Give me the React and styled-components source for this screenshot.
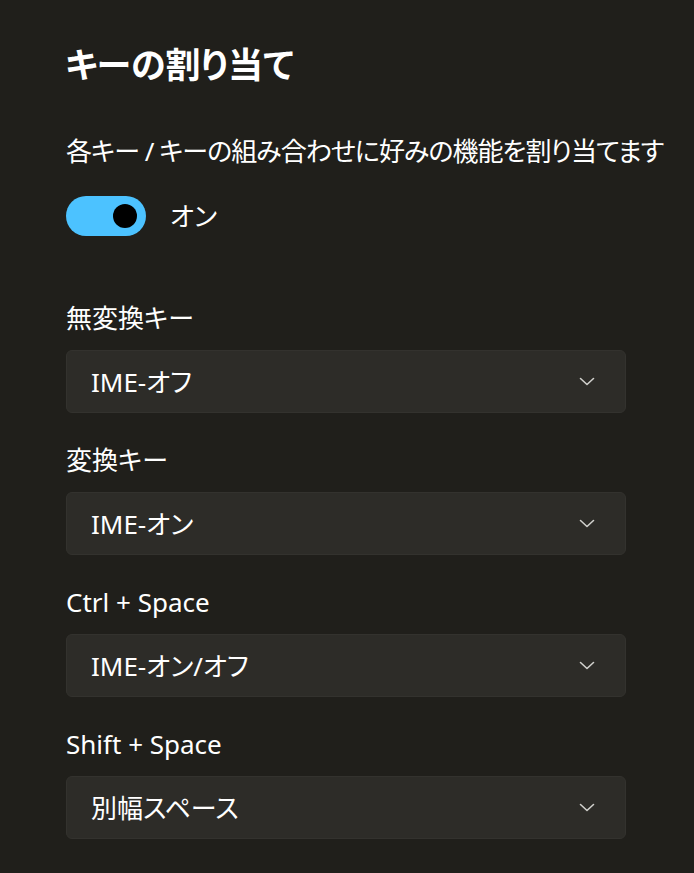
import React from 'react';
import styled, { createGlobalStyle } from 'styled-components';

const GlobalStyle = createGlobalStyle`
  html, body {
    margin: 0;
    padding: 0;
    background: #201f1b;
  }
  body {
    font-family: "Noto Sans", "Noto Sans CJK JP", sans-serif;
    font-feature-settings: "palt";
    color: #ffffff;
  }
`;

const Page = styled.div`
  width: 694px;
  height: 873px;
  box-sizing: border-box;
  padding: 41px 0 0 66px;
  background: #201f1b;
  overflow: hidden;
`;

const Title = styled.h1`
  margin: 0 0 0 -1px;
  font-size: 35px;
  line-height: 48px;
  font-weight: 700;
`;

const Description = styled.p`
  margin: 44px 0 0;
  font-size: 26px;
  line-height: 36px;
  letter-spacing: -1px;
  white-space: nowrap;
`;

const ToggleRow = styled.div`
  display: flex;
  align-items: center;
  gap: 24px;
  margin-top: 27px;
  height: 40px;
`;

const Track = styled.div`
  width: 80px;
  height: 40px;
  border-radius: 20px;
  background: ${p => (p.$on ? '#4cc2ff' : 'transparent')};
  display: flex;
  align-items: center;
  justify-content: ${p => (p.$on ? 'flex-end' : 'flex-start')};
  padding: 0 9px;
  box-sizing: border-box;
`;

const Knob = styled.div`
  width: 24px;
  height: 24px;
  border-radius: 50%;
  background: #000000;
`;

const ToggleLabel = styled.span`
  font-size: 26px;
  line-height: 36px;
`;

const Settings = styled.div`
  display: flex;
  flex-direction: column;
  gap: 29px;
  margin-top: 64px;
`;

const Field = styled.div`
  display: flex;
  flex-direction: column;
  gap: 14px;
`;

const Label = styled.div`
  font-size: 26px;
  line-height: 36px;
`;

const Select = styled.div`
  width: 560px;
  height: 63px;
  box-sizing: border-box;
  background: #2d2c28;
  border: 1px solid #33322e;
  border-radius: 6px;
  display: flex;
  align-items: center;
  justify-content: space-between;
  padding: 0 30px 0 24px;
`;

const Value = styled.span`
  font-size: 26px;
  line-height: 36px;
`;

const Chevron = () => (
  <svg width="16" height="10" viewBox="0 0 16 10" fill="none">
    <path d="M1.5 1.5 L8 7.5 L14.5 1.5" stroke="#d0d0cc" strokeWidth="1.6" strokeLinecap="round" strokeLinejoin="round" />
  </svg>
);

const fields = [
  { label: '無変換キー', value: 'IME-オフ' },
  { label: '変換キー', value: 'IME-オン' },
  { label: 'Ctrl + Space', value: 'IME-オン/オフ' },
  { label: 'Shift + Space', value: '別幅スペース' }
];

export default function App() {
  return (
    <Page>
      <GlobalStyle />
      <Title>キーの割り当て</Title>
      <Description>各キー / キーの組み合わせに好みの機能を割り当てます</Description>
      <ToggleRow>
        <Track $on>
          <Knob />
        </Track>
        <ToggleLabel>オン</ToggleLabel>
      </ToggleRow>
      <Settings>
        {fields.map(f => (
          <Field key={f.label}>
            <Label>{f.label}</Label>
            <Select>
              <Value>{f.value}</Value>
              <Chevron />
            </Select>
          </Field>
        ))}
      </Settings>
    </Page>
  );
}
